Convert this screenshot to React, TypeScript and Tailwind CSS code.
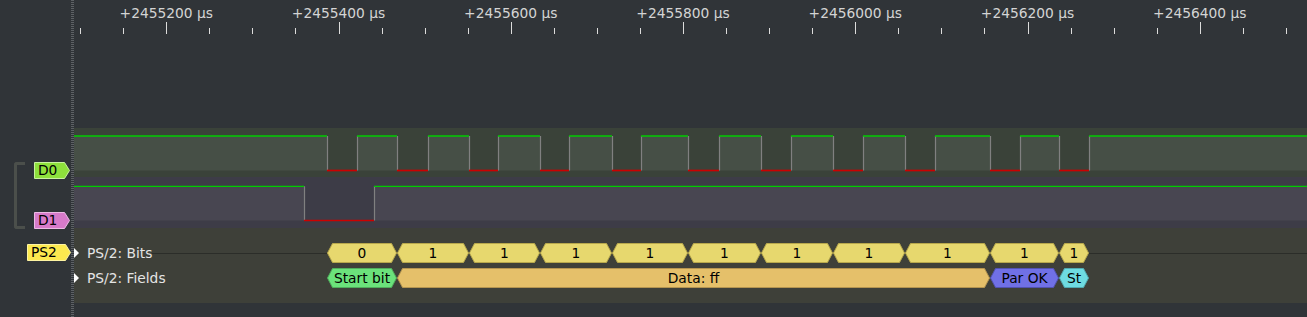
import React from 'react';

const X0 = 74;
const W = 1307 - X0;
const x = (px: number) => px - X0;

const FONT = "font-['DejaVu_Sans',sans-serif]";

// ruler: minor tick every 50 µs, major every 200 µs
const ticks = Array.from({ length: 29 }, (_, i) => i - 2).map((k) => ({
  k,
  px: 166.3 + k * 43.0625,
}));

const d0Edges = [327, 357, 397, 428, 469, 498, 540, 569, 612, 641, 688, 719, 761, 791, 833, 863, 905, 935, 990, 1020, 1059, 1089];
const d1Edges = [304, 374];

const bits: [number, number, string][] = [
  [327, 397, '0'],
  [397, 469, '1'],
  [469, 540, '1'],
  [540, 612, '1'],
  [612, 688, '1'],
  [688, 761, '1'],
  [761, 833, '1'],
  [833, 905, '1'],
  [905, 990, '1'],
  [990, 1059, '1'],
  [1059, 1089, '1'],
];

const fields: [number, number, string, string, string][] = [
  [327, 397, 'Start bit', '#6be27b', '#4fae5c'],
  [397, 990, 'Data: ff', '#e5c06a', '#b59550'],
  [990, 1059, 'Par OK', '#7070e6', '#5252b2'],
  [1059, 1089, 'St', '#6edce1', '#50aab0'],
];

function Wave({ edges, hi, lo, h, fill }: { edges: number[]; hi: number; lo: number; h: number; fill: string }) {
  const pts = [X0, ...edges, 1307];
  const segs = pts.slice(0, -1).map((a, i) => ({ a, b: pts[i + 1], high: i % 2 === 0 }));
  return (
    <svg width={W} height={h} className="block">
      {segs.map((s, i) =>
        s.high ? <rect key={'f' + i} x={x(s.a)} y={hi} width={s.b - s.a} height={lo - hi} fill={fill} /> : null
      )}
      {edges.map((e) => (
        <line key={'e' + e} x1={x(e) + 0.5} x2={x(e) + 0.5} y1={hi} y2={lo} stroke="#808080" strokeWidth={1.2} />
      ))}
      {segs.map((s, i) => (
        <line
          key={'l' + i}
          x1={x(s.a)}
          x2={x(s.b)}
          y1={s.high ? hi : lo}
          y2={s.high ? hi : lo}
          stroke={s.high ? '#00cc00' : '#cc0000'}
          strokeWidth={s.high ? 1.3 : 1.7}
        />
      ))}
    </svg>
  );
}

function hexPoints(a: number, b: number, cy: number) {
  const l = x(a) + 0.5;
  const r = x(b) - 0.5;
  const t = cy - 9.5;
  const btm = cy + 9.5;
  return `${l},${cy} ${l + 5},${t} ${r - 5},${t} ${r},${cy} ${r - 5},${btm} ${l + 5},${btm}`;
}

function Tag({ label, w, fill, edge }: { label: string; w: number; fill: string; edge: string }) {
  return (
    <div className="relative h-[17px]" style={{ width: w }}>
      <svg width={w} height={17} className="absolute inset-0">
        <polygon
          points={`0.5,0.5 ${w - 5.5},0.5 ${w - 0.5},8.5 ${w - 5.5},16.5 0.5,16.5`}
          fill={fill}
          stroke={edge}
          strokeWidth={1}
        />
      </svg>
      <span className="relative block pl-[4px] text-[13.8px] leading-[17px] text-black">{label}</span>
    </div>
  );
}

export default function App() {
  return (
    <div className={`flex h-[317px] w-[1307px] overflow-hidden bg-[#303438] ${FONT}`}>
      {/* Header column */}
      <div className="flex w-[71px] flex-col">
        <div className="h-[128px]" />
        <div className="flex h-[100px] pl-[14px]">
          <div className="mt-[34px] h-[67px] w-[11px] rounded-l-[3px] border-[3px] border-r-0 border-[#4b4f4b]" />
          <div className="ml-[9px] flex flex-col gap-[33px] pt-[34px]">
            <Tag label="D0" w={36} fill="#8ee03c" edge="#c8f39c" />
            <Tag label="D1" w={36} fill="#d67ac9" edge="#ecb9e5" />
          </div>
        </div>
        <div className="h-[75px] pl-[27px] pt-[16px]">
          <Tag label="PS2" w={44} fill="#fce94f" edge="#fdf3a2" />
        </div>
      </div>

      {/* Divider */}
      <div className="w-[3px] bg-[repeating-linear-gradient(to_bottom,#5d6165_0px,#5d6165_1px,transparent_1px,transparent_2px)]" />

      {/* Trace view */}
      <div className="flex flex-1 flex-col">
        <svg width={W} height={40} className="block">
          {ticks.map((t) => {
            const major = t.k % 4 === 0;
            const tx = Math.round(x(t.px)) + 0.5;
            return <line key={t.k} x1={tx} x2={tx} y1={major ? 22 : 28} y2={34} stroke="#dcdcdc" strokeWidth={1} />;
          })}
          {ticks
            .filter((t) => t.k % 4 === 0)
            .map((t) => (
              <text
                key={'t' + t.k}
                x={x(t.px)}
                y={13}
                textAnchor="middle"
                dominantBaseline="central"
                fill="#d4d4d4"
                fontSize="13.8px"
              >
                {`+${2455200 + (t.k / 4) * 200} µs`}
              </text>
            ))}
        </svg>
        <div className="h-[88px]" />

        {/* D0 */}
        <div className="h-[49px] bg-[#3a4239]">
          <Wave edges={d0Edges} hi={8} lo={42.5} h={49} fill="#464f46" />
        </div>

        {/* D1 */}
        <div className="h-[51px] bg-[#3d3c47]">
          <Wave edges={d1Edges} hi={9.3} lo={43.5} h={51} fill="#484651" />
        </div>

        {/* Decoder */}
        <div className="relative h-[75px] bg-[#3e4039]">
          <svg width={W} height={75} className="absolute inset-0">
            <line x1={x(152)} x2={x(327)} y1={25.5} y2={25.5} stroke="#2b2d29" />
            <line x1={x(1089)} x2={W} y1={25.5} y2={25.5} stroke="#2b2d29" />
            {bits.map(([a, b, t], i) => (
              <g key={'b' + i}>
                <polygon points={hexPoints(a, b, 25)} fill="#e7d86e" stroke="#b8a84c" />
                <text x={x((a + b) / 2)} y={25} textAnchor="middle" dominantBaseline="central" fontSize="13.8px" fill="#000">
                  {t}
                </text>
              </g>
            ))}
            {fields.map(([a, b, t, f, s], i) => (
              <g key={'f' + i}>
                <polygon points={hexPoints(a, b, 50)} fill={f} stroke={s} />
                <text x={x((a + b) / 2)} y={50} textAnchor="middle" dominantBaseline="central" fontSize="13.8px" fill="#000">
                  {t}
                </text>
              </g>
            ))}
          </svg>
          <div className="relative flex flex-col gap-[5px] pt-[15px] text-[13.8px] text-[#e4e4e4]">
            {['PS/2: Bits', 'PS/2: Fields'].map((l) => (
              <div key={l} className="flex h-[20px] items-center gap-[8px]">
                <div className="h-0 w-0 border-y-[5px] border-l-[5px] border-y-transparent border-l-white" />
                <span>{l}</span>
              </div>
            ))}
          </div>
        </div>
      </div>
    </div>
  );
}
